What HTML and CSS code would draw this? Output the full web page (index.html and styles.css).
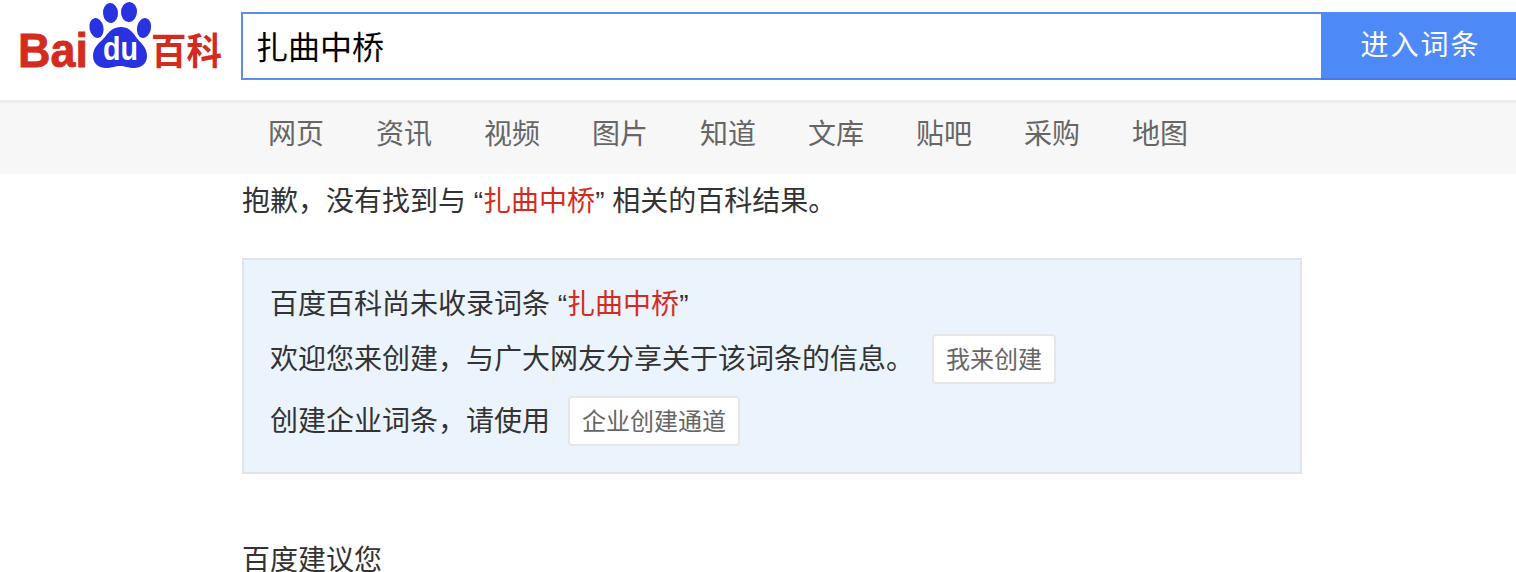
FILE: index.html
```html
<!DOCTYPE html>
<html lang="zh-CN">
<head>
<meta charset="utf-8">
<title>百度百科</title>
<link rel="stylesheet" href="styles.css">
</head>
<body>
<header class="top">
  <a class="logo" href="#">
    <svg class="logo-svg" width="241" height="80" viewBox="0 0 241 80">
      <text class="logo-bai" x="18" y="67" textLength="70" lengthAdjust="spacingAndGlyphs">Bai</text>
      <g class="paw">
        <ellipse cx="96.500" cy="28" rx="7" ry="10" transform="rotate(-12 96.500 28)"/>
        <ellipse cx="110.500" cy="13" rx="7.500" ry="10" transform="rotate(-5 110.500 13)"/>
        <ellipse cx="129" cy="12" rx="8" ry="10" transform="rotate(4 129 12)"/>
        <ellipse cx="144" cy="28" rx="7" ry="10" transform="rotate(12 144 28)"/>
        <path d="M121 27c7 0 11 4 15 10 3 5 11 9 11 19 0 8-6 12-13 12-6 0-9-2-14-2s-8 2-14 2c-7 0-13-4-13-12 0-10 8-14 12-19 4-6 9-10 16-10z"/>
      </g>
      <text class="logo-du" x="103" y="60" textLength="35" lengthAdjust="spacingAndGlyphs">du</text>
      <text class="logo-baike" x="151" y="65" textLength="71" lengthAdjust="spacingAndGlyphs">百科</text>
    </svg>
  </a>
  <form class="search">
    <div class="search-input">扎曲中桥</div>
    <div class="search-btn">进入词条</div>
  </form>
</header>
<nav class="nav">
  <a href="#">网页</a>
  <a href="#">资讯</a>
  <a href="#">视频</a>
  <a href="#">图片</a>
  <a href="#">知道</a>
  <a href="#">文库</a>
  <a href="#">贴吧</a>
  <a href="#">采购</a>
  <a href="#">地图</a>
</nav>
<main class="main">
  <p class="sorry">抱歉，没有找到与 “<em>扎曲中桥</em>” 相关的百科结果。</p>
  <section class="box">
    <p class="box-line">百度百科尚未收录词条 “<em>扎曲中桥</em>”</p>
    <p class="box-line with-btn row-two">欢迎您来创建，与广大网友分享关于该词条的信息。<a class="btn btn-create" href="#">我来创建</a></p>
    <p class="box-line with-btn row-three">创建企业词条，请使用<a class="btn btn-ent" href="#">企业创建通道</a></p>
  </section>
  <h2 class="suggest">百度建议您</h2>
</main>
</body>
</html>
```
FILE: styles.css
```css
* { box-sizing: border-box; }
html, body { margin: 0; padding: 0; height: 572px; overflow: hidden; background: #fff; }
body { font-family: "Liberation Sans", "Noto Sans CJK SC", sans-serif; color: #333; }
a { text-decoration: none; color: inherit; }
p, h2 { margin: 0; font-weight: 400; }
em { font-style: normal; color: #d32c1f; }

.top { display: flex; height: 100px; padding-top: 12px; align-items: flex-start; }
.logo { display: block; width: 241px; height: 80px; margin-top: -12px; flex: none; }
.logo-svg { display: block; }
.logo-bai { font-family: "Liberation Sans", sans-serif; font-weight: 700; font-size: 49px; fill: #d32c1f; stroke: #d32c1f; stroke-width: 0.8px; }
.paw { fill: #2932e1; }
.logo-du { font-family: "Liberation Sans", sans-serif; font-weight: 700; font-size: 33px; fill: #fff; }
.logo-baike { font-family: "Noto Sans CJK SC", sans-serif; font-weight: 700; font-size: 37px; fill: #d32c1f; }

.search { display: flex; height: 68px; flex: 1; }
.search-input { width: 1080px; height: 68px; border: 2px solid #5b8def; border-right: 0; padding-left: 13px; font-size: 32px; line-height: 68px; color: #000; background: #fff; }
.search-btn { flex: 1; padding-left: 4px; background: #4e8af7; border-bottom: 2px solid #4579e8; color: #fff; font-size: 28px; letter-spacing: 2px; line-height: 68px; text-align: center; }

.nav { display: flex; height: 74px; padding-left: 268px; gap: 52px; background: #f7f7f7; border-top: 3px solid #ebebeb; font-size: 28px; line-height: 63px; color: #666; }
.nav a { width: 56px; white-space: nowrap; }

.main { width: 1060px; margin-left: 242px; }
.sorry { font-size: 28px; line-height: 40px; margin-top: 8px; color: #333; }

.box { width: 1060px; height: 216px; margin-top: 36px; padding: 25px 26px 0; background: #ebf3fd; border: 2px solid #e1e5ea; }
.box-line { font-size: 28px; line-height: 40px; color: #333; white-space: nowrap; }
.with-btn { display: flex; align-items: flex-start; height: 50px; line-height: 52px; }
.row-two { margin-top: 9px; }
.row-three { margin-top: 12px; }
.btn { display: block; height: 50px; border: 2px solid #e6e6e6; border-radius: 4px; background: #fff; color: #666; font-size: 24px; line-height: 47px; text-align: center; }
.btn-create { width: 124px; margin-left: 18px; }
.btn-ent { width: 172px; margin-left: 18px; }

.suggest { font-size: 28px; line-height: 40px; margin-top: 67px; color: #333; }
```
